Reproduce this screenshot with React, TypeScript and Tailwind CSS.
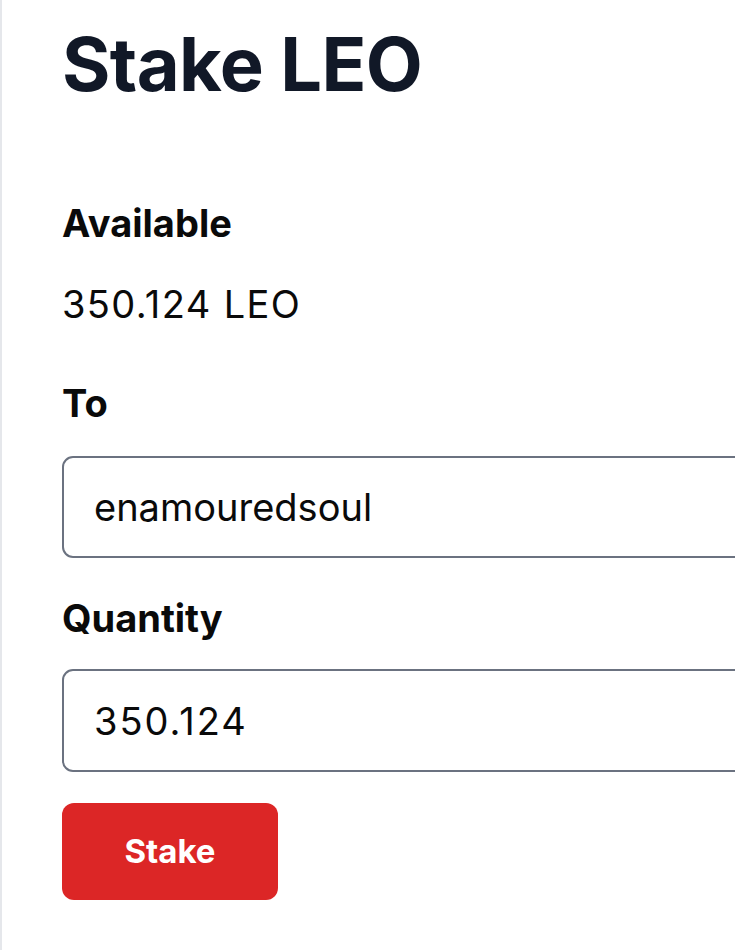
import React from "react";

export default function App() {
  return (
    <div className="relative w-[735px] h-[950px] overflow-hidden bg-white border-l-2 border-[#e5e7eb]" style={{ fontFamily: "Inter, sans-serif" }}>
      <div className="pl-[60px] pt-[18px] flex flex-col">
        <h1 className="text-[74px] leading-[92px] font-bold tracking-[-0.6px] text-[#111827] m-0">Stake LEO</h1>
        <div className="mt-[90px] text-[38px] leading-[46px] font-bold text-[#0a0a0a]">Available</div>
        <div className="mt-[35px] text-[38px] leading-[46px] tracking-[1.4px] text-[#0a0a0a]">350.124 LEO</div>
        <div className="mt-[53px] text-[38px] leading-[46px] font-bold text-[#0a0a0a]">To</div>
        <input
          readOnly
          value="enamouredsoul"
          className="mt-[30px] w-[760px] h-[102px] border-2 border-[#6b7280] rounded-[11px] px-[30px] text-[38px] text-[#0a0a0a] bg-white outline-none"
          style={{ fontFamily: "Inter, sans-serif" }}
        />
        <div className="mt-[37px] text-[38px] leading-[46px] font-bold text-[#0a0a0a]">Quantity</div>
        <input
          readOnly
          value="350.124"
          className="mt-[28px] w-[760px] h-[103px] border-2 border-[#6b7280] rounded-[11px] px-[30px] text-[38px] tracking-[2px] text-[#0a0a0a] bg-white outline-none"
          style={{ fontFamily: "Inter, sans-serif" }}
        />
        <button className="mt-[31px] w-[216px] h-[97px] rounded-[12px] bg-[#dc2626] text-white text-[33px] font-bold">
          Stake
        </button>
      </div>
    </div>
  );
}
